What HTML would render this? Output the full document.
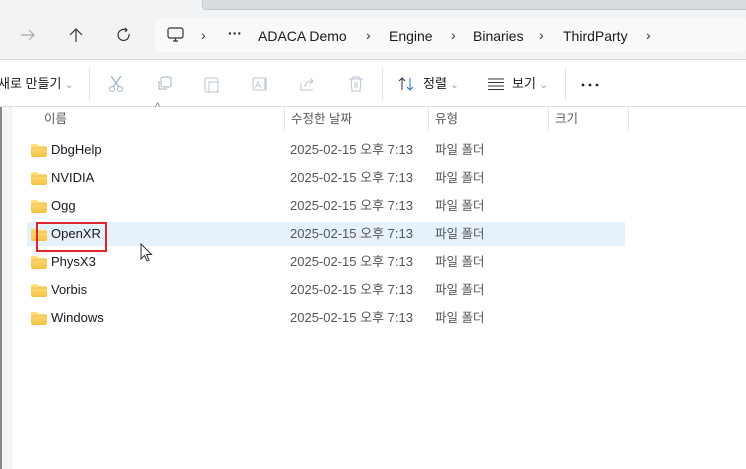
<!DOCTYPE html>
<html><head><meta charset="utf-8"><style>
*{margin:0;padding:0;box-sizing:border-box}
body{width:746px;height:469px;overflow:hidden;background:#fff;font-family:"Liberation Sans","Noto Sans CJK KR",sans-serif;position:relative;color:#1a1a1a}
.abs{position:absolute}
.t{font-size:13px;white-space:nowrap;line-height:16px}
.g{color:#5a5a5a}
.row{position:absolute;left:27px;width:598px;height:24px}
.fold{position:absolute;left:4px;top:6px;width:16px;height:13px}
.name,.date,.type{position:absolute;top:0;line-height:24px;height:24px;white-space:nowrap}
.name{left:24px;font-size:13px}
.date{left:263px;font-size:13px;color:#555}
.type{left:408px;font-size:12.5px;color:#555}
.bc{font-size:14px}
</style></head><body>
<div class="abs" style="left:0;top:0;width:746px;height:60px;background:#f1f3f4"></div>
<div class="abs" style="left:202px;top:0;width:544px;height:10px;background:#d6dcdf;border-bottom:1px solid #c4cacd;border-left:1px solid #c4cacd;border-radius:0 0 0 4px"></div>
<div class="abs" style="left:155px;top:18px;width:591px;height:34px;background:#f9f9f9;border-radius:4px"></div>
<div class="abs" style="left:0;top:59px;width:746px;height:1px;background:#d9d9d9"></div>
<svg class="abs" style="left:20px;top:28px" width="16" height="14"><path d="M1 7H14M9 2L14 7L9 12" stroke="#aaa" stroke-width="1.2" fill="none"/></svg>
<svg class="abs" style="left:68px;top:27px" width="16" height="16"><path d="M8 15V2M2 8L8 2L14 8" stroke="#333" stroke-width="1.2" fill="none"/></svg>
<svg class="abs" style="left:116px;top:27px" width="16" height="16"><path d="M13 7A5.5 5.5 0 1 1 10 3" stroke="#333" stroke-width="1.2" fill="none"/><path d="M9 1L11 3L9 5" stroke="#333" stroke-width="1.2" fill="none"/></svg>
<svg class="abs" style="left:167px;top:27px" width="18" height="16"><rect x="1" y="1" width="15" height="10" rx="2" stroke="#333" stroke-width="1.2" fill="none"/><path d="M6 14H11M8.5 11V14" stroke="#333" stroke-width="1.2"/></svg>
<div class="abs t bc" style="left:201px;top:27px;color:#333">›</div>
<div class="abs t bc" style="left:228px;top:25px;font-weight:bold">···</div>
<div class="abs t bc" style="left:258px;top:28px">ADACA Demo</div>
<div class="abs t bc" style="left:366px;top:27px;color:#333">›</div>
<div class="abs t bc" style="left:389px;top:28px">Engine</div>
<div class="abs t bc" style="left:451px;top:27px;color:#333">›</div>
<div class="abs t bc" style="left:473px;top:28px">Binaries</div>
<div class="abs t bc" style="left:539px;top:27px;color:#333">›</div>
<div class="abs t bc" style="left:563px;top:28px">ThirdParty</div>
<div class="abs t bc" style="left:646px;top:27px;color:#333">›</div>
<div class="abs t" style="left:-2px;top:76px">새로 만들기 <span style="color:#999;font-size:10px">⌄</span></div>
<div class="abs" style="left:89px;top:68px;width:1px;height:32px;background:#e3e3e3"></div>
<svg class="abs" style="left:107px;top:75px" width="18" height="18"><path d="M4 1L12 12M14 1L6 12" stroke="#9cb4cc" stroke-width="1.2"/><circle cx="5" cy="14" r="2.5" stroke="#9cb4cc" fill="none"/><circle cx="13" cy="14" r="2.5" stroke="#9cb4cc" fill="none"/></svg>
<svg class="abs" style="left:156px;top:75px" width="18" height="18"><rect x="5" y="2" width="10" height="10" rx="2" stroke="#9cb4cc" fill="none"/><path d="M3 6V14H11" stroke="#9cb4cc" fill="none"/></svg>
<svg class="abs" style="left:203px;top:75px" width="18" height="18"><rect x="2" y="3" width="13" height="14" rx="2" stroke="#b8c4d0" fill="none"/><rect x="6" y="7" width="9" height="10" stroke="#b8c4d0" fill="none"/></svg>
<svg class="abs" style="left:251px;top:75px" width="18" height="18"><rect x="2" y="3" width="12" height="12" rx="2" stroke="#b8c4d0" fill="none"/><text x="4" y="13" font-size="9" fill="#b8c4d0" font-family="Liberation Sans">A</text><path d="M15 2V16" stroke="#b8c4d0"/></svg>
<svg class="abs" style="left:299px;top:75px" width="18" height="18"><path d="M2 8V15H14" stroke="#b8c4d0" fill="none"/><path d="M6 12C6 8 9 6 13 6M11 3L14 6L11 9" stroke="#b8c4d0" fill="none"/></svg>
<svg class="abs" style="left:347px;top:75px" width="18" height="18"><path d="M2 4H16M6 4V2H12V4M4 4L5 16H13L14 4M8 7V13M10 7V13" stroke="#b8c4d0" fill="none"/></svg>
<div class="abs" style="left:382px;top:68px;width:1px;height:32px;background:#e3e3e3"></div>
<svg class="abs" style="left:398px;top:76px" width="18" height="16"><path d="M4 14V2M1 5L4 2L7 5" stroke="#333" stroke-width="1" fill="none"/><path d="M12 2V14M9 11L12 14L15 11" stroke="#2a6fc9" fill="none"/></svg>
<div class="abs t" style="left:423px;top:76px">정렬 <span style="color:#999;font-size:10px">⌄</span></div>
<svg class="abs" style="left:487px;top:78px" width="18" height="12"><path d="M1 1H17M1 4.5H17M1 8H17M1 11.5H17" stroke="#333" stroke-width="1"/></svg>
<div class="abs t" style="left:512px;top:76px">보기 <span style="color:#999;font-size:10px">⌄</span></div>
<div class="abs" style="left:565px;top:68px;width:1px;height:32px;background:#e3e3e3"></div>
<svg class="abs" style="left:581px;top:83px" width="18" height="4"><circle cx="2" cy="2" r="1.4" fill="#222"/><circle cx="9" cy="2" r="1.4" fill="#222"/><circle cx="16" cy="2" r="1.4" fill="#222"/></svg>
<div class="abs" style="left:0;top:106px;width:746px;height:1px;background:#e0e0e0"></div>
<div class="abs" style="left:0;top:107px;width:11px;height:362px;background:#f5f5f5"></div>
<div class="abs" style="left:0;top:107px;width:2px;height:362px;background:#8a8a8a"></div>
<div class="abs" style="left:11px;top:107px;width:1px;height:362px;background:#ececec"></div>
<div class="abs t g" style="left:44px;top:111px;font-size:12.5px">이름</div>
<div class="abs" style="left:155px;top:101px;font-size:11px;color:#777">^</div>
<div class="abs" style="left:284px;top:107px;width:1px;height:24px;background:#e8e8e8"></div>
<div class="abs t g" style="left:291px;top:111px;font-size:12.5px">수정한 날짜</div>
<div class="abs" style="left:428px;top:107px;width:1px;height:24px;background:#e8e8e8"></div>
<div class="abs t g" style="left:435px;top:111px;font-size:12.5px">유형</div>
<div class="abs" style="left:548px;top:107px;width:1px;height:24px;background:#e8e8e8"></div>
<div class="abs t g" style="left:555px;top:111px;font-size:12.5px">크기</div>
<div class="abs" style="left:628px;top:107px;width:1px;height:24px;background:#e8e8e8"></div>
<svg width="0" height="0" style="position:absolute"><defs><linearGradient id="fg" x1="0" y1="0" x2="0" y2="1"><stop offset="0" stop-color="#ffe28a"/><stop offset="1" stop-color="#f5c042"/></linearGradient></defs></svg>
<div class="row" style="top:138px"><svg class="fold" viewBox="0 0 16 13"><path d="M0 2Q0 0 2 0H6L8 2H14Q16 2 16 4V11Q16 13 14 13H2Q0 13 0 11Z" fill="url(#fg)"/><path d="M0 4H16" stroke="#e5ad2e" stroke-width=".6"/></svg><div class="name">DbgHelp</div><div class="date">2025-02-15 오후 7:13</div><div class="type">파일 폴더</div></div>
<div class="row" style="top:166px"><svg class="fold" viewBox="0 0 16 13"><path d="M0 2Q0 0 2 0H6L8 2H14Q16 2 16 4V11Q16 13 14 13H2Q0 13 0 11Z" fill="url(#fg)"/><path d="M0 4H16" stroke="#e5ad2e" stroke-width=".6"/></svg><div class="name">NVIDIA</div><div class="date">2025-02-15 오후 7:13</div><div class="type">파일 폴더</div></div>
<div class="row" style="top:194px"><svg class="fold" viewBox="0 0 16 13"><path d="M0 2Q0 0 2 0H6L8 2H14Q16 2 16 4V11Q16 13 14 13H2Q0 13 0 11Z" fill="url(#fg)"/><path d="M0 4H16" stroke="#e5ad2e" stroke-width=".6"/></svg><div class="name">Ogg</div><div class="date">2025-02-15 오후 7:13</div><div class="type">파일 폴더</div></div>
<div class="row" style="top:222px;background:#e5f1fb"><svg class="fold" viewBox="0 0 16 13"><path d="M0 2Q0 0 2 0H6L8 2H14Q16 2 16 4V11Q16 13 14 13H2Q0 13 0 11Z" fill="url(#fg)"/><path d="M0 4H16" stroke="#e5ad2e" stroke-width=".6"/></svg><div class="name">OpenXR</div><div class="date">2025-02-15 오후 7:13</div><div class="type">파일 폴더</div></div>
<div class="row" style="top:250px"><svg class="fold" viewBox="0 0 16 13"><path d="M0 2Q0 0 2 0H6L8 2H14Q16 2 16 4V11Q16 13 14 13H2Q0 13 0 11Z" fill="url(#fg)"/><path d="M0 4H16" stroke="#e5ad2e" stroke-width=".6"/></svg><div class="name">PhysX3</div><div class="date">2025-02-15 오후 7:13</div><div class="type">파일 폴더</div></div>
<div class="row" style="top:278px"><svg class="fold" viewBox="0 0 16 13"><path d="M0 2Q0 0 2 0H6L8 2H14Q16 2 16 4V11Q16 13 14 13H2Q0 13 0 11Z" fill="url(#fg)"/><path d="M0 4H16" stroke="#e5ad2e" stroke-width=".6"/></svg><div class="name">Vorbis</div><div class="date">2025-02-15 오후 7:13</div><div class="type">파일 폴더</div></div>
<div class="row" style="top:306px"><svg class="fold" viewBox="0 0 16 13"><path d="M0 2Q0 0 2 0H6L8 2H14Q16 2 16 4V11Q16 13 14 13H2Q0 13 0 11Z" fill="url(#fg)"/><path d="M0 4H16" stroke="#e5ad2e" stroke-width=".6"/></svg><div class="name">Windows</div><div class="date">2025-02-15 오후 7:13</div><div class="type">파일 폴더</div></div>
<div class="abs" style="left:36px;top:222px;width:71px;height:30px;border:2px solid #d9262c"></div>
<svg class="abs" style="left:140px;top:243px" width="14" height="20"><path d="M1 1V16L4.5 12.5L7 18L9 17L6.5 11.5H11.5Z" fill="#fff" stroke="#333" stroke-width="1"/></svg>
</body></html>
